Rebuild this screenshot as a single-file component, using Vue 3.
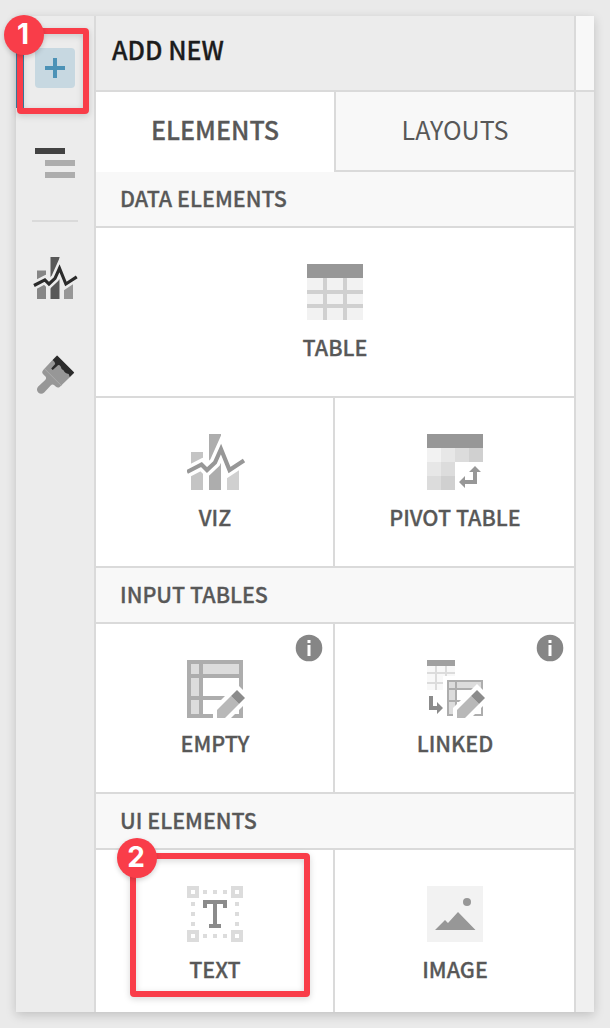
<script setup>
import { h } from 'vue'

const r = (x, y, width, height, fill) => h('rect', { x, y, width, height, fill })
const p = (d, fill) => h('path', { d, fill })

const vizShapes = (c, bg) => [
  r(4, 18, 12, 38, c[0]),
  r(22, 0, 12, 56, c[1]),
  r(40, 30, 12, 26, c[2]),
  ...[[bg, 11], [c[3], 4.2]].map(([stroke, w]) =>
    h('path', {
      d: 'M0 38L14.5 30.5L20 36L28 28.5L34 15L42.5 36L57 26.5',
      fill: 'none', stroke, 'stroke-width': w,
    })),
]

const pencil = [
  p('M26 60V48L50 24L64 38L42 60Z', '#fff'),
  p('M30 50L44 36L52 44L38 58H30Z', '#b8b8b8'),
  p('M44 36L50 30L58 38L52 44Z', '#8b8b8b'),
]

const shapes = {
  table: [
    r(0, 14, 56, 42, '#f2f2f2'),
    r(16, 14, 4, 42, '#d0d0d0'), r(36, 14, 4, 42, '#d0d0d0'),
    r(0, 26, 56, 4, '#d0d0d0'), r(0, 40, 56, 4, '#d0d0d0'),
    r(0, 0, 56, 14, '#979797'),
  ],
  viz: vizShapes(['#c4c4c4', '#adadad', '#d0d0d0', '#979797'], '#fff'),
  railViz: vizShapes(['#868686', '#585858', '#979797', '#2b2b2b'], '#ececec'),
  pivot: [
    r(0, 0, 56, 14, '#979797'),
    r(0, 14, 14, 14, '#f2f2f2'), r(14, 14, 14, 14, '#e7e7e7'),
    r(28, 14, 14, 14, '#dcdcdc'), r(42, 14, 14, 14, '#d0d0d0'),
    r(0, 28, 14, 14, '#e7e7e7'), r(14, 28, 14, 14, '#dcdcdc'),
    r(0, 42, 14, 14, '#dcdcdc'), r(14, 42, 14, 14, '#d0d0d0'),
    p('M48 32L54 38H50V50H38V54L32 48L38 42V46H46V38H42Z', '#979797'),
  ],
  empty: [
    r(0, 0, 56, 58, '#adadad'),
    r(4, 4, 8, 10, '#dcdcdc'), r(16, 4, 36, 10, '#dcdcdc'),
    r(4, 18, 8, 18, '#dcdcdc'), r(4, 40, 8, 14, '#dcdcdc'),
    r(16, 18, 36, 18, '#fff'), r(16, 40, 36, 14, '#fff'),
    ...pencil,
  ],
  linked: [
    r(0, 6, 28, 24, '#f8f8f8'),
    r(8, 6, 2, 24, '#dcdcdc'), r(18, 6, 2, 24, '#dcdcdc'),
    r(0, 12, 28, 2, '#dcdcdc'), r(0, 22, 28, 2, '#dcdcdc'),
    r(0, 0, 28, 6, '#a0a0a0'),
    r(16, 16, 14, 16, '#fff'),
    r(20, 20, 36, 36, '#adadad'),
    r(22, 22, 6, 6, '#dcdcdc'), r(30, 22, 24, 6, '#dcdcdc'),
    r(22, 30, 6, 10, '#dcdcdc'), r(22, 42, 6, 12, '#dcdcdc'),
    r(30, 30, 24, 10, '#fff'), r(30, 42, 24, 12, '#fff'),
    ...pencil,
    p('M2 36H6V46H10V42L16 48L10 54V50H2Z', '#8b8b8b'),
  ],
  text: [
    ...[[0, 0], [44, 0], [0, 44], [44, 44]].flatMap(([x, y]) => [
      r(x, y, 12, 12, '#dcdcdc'), r(x + 4, y + 4, 4, 4, '#fff'),
    ]),
    ...[16, 26, 36].flatMap((n) => [
      r(n, 4, 4, 4, '#dcdcdc'), r(n, 48, 4, 4, '#dcdcdc'),
      r(4, n, 4, 4, '#dcdcdc'), r(48, n, 4, 4, '#dcdcdc'),
    ]),
    r(16, 14, 24, 4, '#8b8b8b'), r(16, 18, 4, 4, '#8b8b8b'), r(36, 18, 4, 4, '#8b8b8b'),
    r(26, 18, 4, 20, '#8b8b8b'), r(22, 38, 12, 4, '#8b8b8b'),
  ],
  image: [
    r(0, 0, 56, 56, '#f2f2f2'),
    h('circle', { cx: 40, cy: 16, r: 4, fill: '#979797' }),
    p('M8 44L18 34L21 37L31 26L48.5 44Z', '#979797'),
  ],
}

const Glyph = ({ name }) =>
  h('svg', { viewBox: '0 0 60 60', 'aria-hidden': 'true' }, shapes[name])

const sections = [
  { title: 'DATA ELEMENTS', items: [
    { label: 'TABLE', icon: 'table', wide: true },
    { label: 'VIZ', icon: 'viz' },
    { label: 'PIVOT TABLE', icon: 'pivot' },
  ] },
  { title: 'INPUT TABLES', items: [
    { label: 'EMPTY', icon: 'empty', info: true },
    { label: 'LINKED', icon: 'linked', info: true },
  ] },
  { title: 'UI ELEMENTS', items: [
    { label: 'TEXT', icon: 'text' },
    { label: 'IMAGE', icon: 'image' },
  ] },
]
</script>

<template>
  <div class="page">
    <div class="window">
      <nav class="rail">
        <div class="rail-active">
          <div class="add">
            <svg width="20" height="20" viewBox="0 0 20 20"><path d="M8 0H12V8H20V12H12V20H8V12H0V8H8Z" fill="#4c92b6" /></svg>
          </div>
        </div>
        <svg class="outline" width="40" height="30" viewBox="0 0 40 30">
          <rect width="30" height="6" fill="#424242" />
          <rect x="10" y="12" width="30" height="6" fill="#adadad" />
          <rect x="10" y="24" width="30" height="6" fill="#adadad" />
        </svg>
        <div class="divider"></div>
        <Glyph name="railViz" class="rail-viz" />
        <svg class="brush" width="40" height="40" viewBox="0.8 0.6 40 40">
          <path d="M21.5 1.2L39 18.5L24.5 32.6Q22.5 34 20.5 32.2L18.8 30.5Q17 29.5 15.5 31L9 38Q6 40.5 3 38Q0.500 35 3 32L10 25.500Q11.500 24 10.500 22.300L8 19.800Q6 17.800 8 15.500Z" fill="#979797" />
          <path d="M22 1L39 18L34.500 22.500L33.500 19.500Q29.500 18.500 28.500 16Q25.500 14 25.500 12Q23.500 9.500 22 11.500L17.500 15.500L16 14L20 9.500Q20 7.500 17.500 5.500Z" fill="#2b2b2b" />
          <path d="M9.500 14.500L26.500 31.500" stroke="#b4b4b4" stroke-width="0.700" />
        </svg>
      </nav>

      <main class="main">
        <header class="header">ADD NEW</header>
        <div class="tabs">
          <div class="tab active">ELEMENTS</div>
          <div class="tab">LAYOUTS</div>
        </div>
        <section v-for="s in sections" :key="s.title">
          <h2 class="title">{{ s.title }}</h2>
          <div class="grid">
            <div v-for="i in s.items" :key="i.label" class="cell" :class="{ wide: i.wide }">
              <Glyph :name="i.icon" class="icon" />
              <span class="label">{{ i.label }}</span>
              <svg v-if="i.info" class="info" width="28" height="28" viewBox="0 0 28 28">
                <circle cx="14" cy="14" r="13.300" fill="#868686" />
                <rect x="12.500" y="6" width="3" height="3" fill="#fff" />
                <rect x="12.500" y="11" width="3" height="11" fill="#fff" />
              </svg>
            </div>
          </div>
        </section>
      </main>

      <aside class="side"><div class="side-head"></div></aside>
    </div>

    <div class="frame one"></div>
    <div class="badge b1">1</div>
    <div class="frame two"></div>
    <div class="badge b2">2</div>
  </div>
</template>

<style>
body { background: #eaeaea; }
</style>

<style scoped>
.page {
  position: relative;
  box-sizing: border-box;
  width: 610px;
  height: 1028px;
  padding: 16px;
  overflow: hidden;
  background: #eaeaea;
  color: #585858;
  font-family: "Noto Sans CJK SC", "Noto Sans CJK JP", "Open Sans", sans-serif;
  font-weight: 500;
}
.window {
  display: flex;
  width: 578px;
  height: 996px;
  background: #ececec;
  box-shadow: 0 3px 10px rgba(0, 0, 0, .18);
}
.rail {
  flex: none;
  box-sizing: border-box;
  width: 80px;
  padding-top: 12px;
  border-right: 2px solid #dadada;
}
.rail svg { display: block; }
.rail-active {
  box-sizing: border-box;
  height: 80px;
  padding: 20px 0 0 11px;
  border-left: 8px solid #397fa3;
}
.add {
  display: grid;
  place-items: center;
  width: 40px;
  height: 40px;
  border-radius: 4px;
  background: #c7d8e1;
}
.outline { margin: 40px 0 0 19px; }
.divider { width: 46px; height: 2px; margin: 42px 0 0 16px; background: #dadada; }
.rail-viz { width: 45px; height: 45px; margin: 35px 0 0 18px; overflow: visible; }
.brush { margin: 53px 0 0 20px; }
.main {
  flex: none;
  box-sizing: border-box;
  width: 480px;
  border-right: 2px solid #dadada;
  background: #fff;
}
.header {
  box-sizing: border-box;
  height: 76px;
  padding-left: 16px;
  border-bottom: 2px solid #dadada;
  background: #ececec;
  color: #1c1c1c;
  font-size: 25px;
  line-height: 67px;
  -webkit-text-stroke: .3px;
}
.tabs { display: flex; height: 80px; }
.tab {
  box-sizing: border-box;
  width: 240px;
  border-left: 2px solid #dadada;
  border-bottom: 2px solid #dadada;
  background: #f8f8f8;
  font-size: 25.1px;
  font-weight: 400;
  line-height: 75px;
  text-align: center;
}
.tab.active {
  width: 238px;
  border: 0;
  background: #fff;
  font-weight: 500;
  -webkit-text-stroke: .3px;
}
.title {
  box-sizing: border-box;
  height: 56px;
  margin: 0;
  padding-left: 24px;
  border-bottom: 2px solid #dadada;
  background: #f8f8f8;
  font-size: 21.5px;
  font-weight: 500;
  line-height: 51px;
  -webkit-text-stroke: .3px;
}
.grid { display: grid; grid-template-columns: 239px 239px; }
.cell {
  position: relative;
  display: flex;
  flex-direction: column;
  align-items: center;
  box-sizing: border-box;
  height: 170px;
  padding: 36px 0 0 1px;
  border-right: 2px solid #dadada;
  border-bottom: 2px solid #dadada;
}
.cell:last-child { border-right: 0; }
.wide { grid-column: 1 / 3; padding-left: 0; border-right: 0; }
section:last-child .cell { height: 162px; border-bottom: 0; }
.icon { flex: none; width: 60px; height: 60px; margin-right: -4px; }
.label {
  margin-top: -4px;
  font-size: 21.5px;
  line-height: 53px;
  -webkit-text-stroke: .3px;
}
.info { position: absolute; top: 10px; right: 10px; }
.side { flex: 1; background: #f0f0f0; }
.side-head { height: 74px; border-bottom: 2px solid #dadada; background: #f8f8f8; }
.frame {
  position: absolute;
  box-sizing: border-box;
  border: 6px solid #f93d49;
  border-radius: 4px;
  filter: drop-shadow(0 2px 3px rgba(0, 0, 0, .16));
}
.one { left: 17px; top: 28px; width: 71.5px; height: 85.5px; }
.two { left: 130px; top: 853px; width: 180px; height: 144px; }
.badge {
  position: absolute;
  box-sizing: border-box;
  width: 40px;
  height: 40px;
  padding-right: 1px;
  border-radius: 50%;
  background: #f93d49;
  box-shadow: 0 2px 5px rgba(0, 0, 0, .18);
  color: #fff;
  font: 700 28px/39px Inter, sans-serif;
  text-align: center;
}
.b1 { left: 3.5px; top: 14.5px; }
.b2 { left: 116.5px; top: 838px; }
</style>
